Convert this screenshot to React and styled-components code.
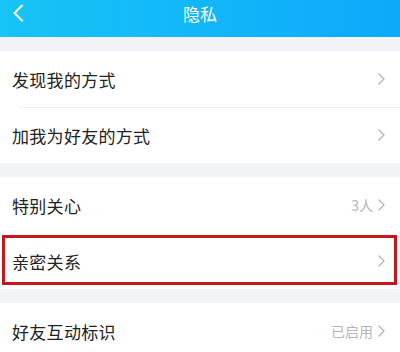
import React from 'react'
import styled, { createGlobalStyle } from 'styled-components'

const GlobalStyle = createGlobalStyle`
  html, body {
    margin: 0;
    padding: 0;
    background: #f2f3f7;
  }
  body {
    font-family: "Noto Sans CJK SC", "Noto Sans", sans-serif;
  }
`

const Page = styled.div`
  width: 400px;
  height: 352px;
  overflow: hidden;
  background: #f2f3f7;
`

const Header = styled.header`
  height: 37px;
  position: relative;
  display: flex;
  align-items: flex-start;
  justify-content: center;
  background: linear-gradient(90deg, #17c4f6 0%, #0da9fb 100%);
`

const BackButton = styled.div`
  position: absolute;
  left: 12px;
  top: 4px;
  width: 12px;
  height: 18px;
  display: flex;
`

const Title = styled.h1`
  margin: 2px 0 0;
  font-size: 17px;
  line-height: 24px;
  font-weight: 400;
  color: #ffffff;
`

const Group = styled.section`
  margin-top: 14px;
  background: #ffffff;
`

const Row = styled.div`
  position: relative;
  height: 56px;
  display: flex;
  align-items: center;
  padding: 0 15px 0 12px;

  & + &::before {
    content: '';
    position: absolute;
    left: 18px;
    right: 0;
    top: 0;
    height: 1px;
    background: #efeff2;
  }

  ${({ highlighted }) =>
    highlighted &&
    `
    &::after {
      content: '';
      position: absolute;
      left: 2px;
      right: 3px;
      top: 2px;
      bottom: 4px;
      border: 3px solid #c4171d;
      pointer-events: none;
    }
  `}
`

const Label = styled.span`
  flex: 1;
  font-size: 17px;
  color: #222222;
  letter-spacing: 0.3px;
`

const Value = styled.span`
  font-size: 14px;
  color: #b5b5b8;
  margin-right: 5px;
`

const Chevron = () => (
  <svg width="7" height="12" viewBox="0 0 7 12">
    <path d="M1 1 L6 6 L1 11" fill="none" stroke="#b4b4b8" strokeWidth="1.4" strokeLinecap="round" strokeLinejoin="round" />
  </svg>
)

const SettingRow = ({ label, value, highlighted }) => (
  <Row highlighted={highlighted}>
    <Label>{label}</Label>
    {value && <Value>{value}</Value>}
    <Chevron />
  </Row>
)

export default function App() {
  return (
    <Page>
      <GlobalStyle />
      <Header>
        <BackButton>
          <svg width="12" height="18" viewBox="0 0 12 18">
            <path d="M10 1.5 L2.5 9 L10 16.5" fill="none" stroke="#ffffff" strokeWidth="2" strokeLinecap="round" strokeLinejoin="round" />
          </svg>
        </BackButton>
        <Title>隐私</Title>
      </Header>
      <Group>
        <SettingRow label="发现我的方式" />
        <SettingRow label="加我为好友的方式" />
      </Group>
      <Group>
        <SettingRow label="特别关心" value="3人" />
        <SettingRow label="亲密关系" highlighted />
      </Group>
      <Group>
        <SettingRow label="好友互动标识" value="已启用" />
      </Group>
    </Page>
  )
}
